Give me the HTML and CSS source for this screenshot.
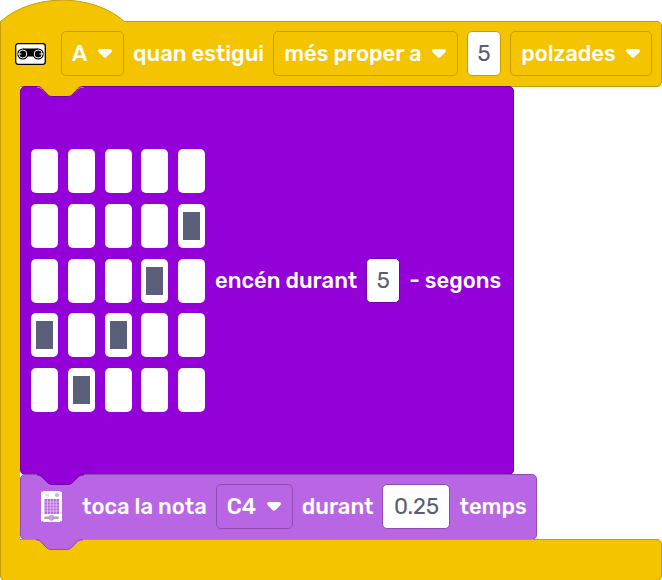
FILE: index.html
```html
<!DOCTYPE html>
<html lang="ca">
<head>
<meta charset="utf-8">
<meta name="viewport" content="width=device-width, initial-scale=1">
<title>Blocs</title>
<link rel="stylesheet" href="styles.css">
</head>
<body>
<main class="event">
  <svg class="hat" width="126" height="22" viewBox="0 0 126 22" aria-hidden="true"><path d="M.5 22V21.500C33-7 92-7 124.500 21.500L126 22z" fill="#f5c400"/><path d="M.5 21.500C33-7 92-7 124.500 21.500" fill="none" stroke="#c49d00"/></svg>
  <div class="row head">
    <svg class="sensor" width="31" height="22" viewBox="0 0 31 22" role="img" aria-label="Sensor de distància"><rect x=".7" y=".7" width="29.600" height="20.600" rx="2.500" fill="#fff" stroke="#000" stroke-width="1.300"/><path d="M8 5.500h15v8H8z"/><circle cx="7.800" cy="11" r="5.600"/><circle cx="23.200" cy="11" r="5.600"/><g fill="none" stroke="#fff"><circle cx="7.800" cy="11" r="4"/><circle cx="23.200" cy="11" r="4"/></g><path d="M2.500 11h4M24.500 11h4" stroke="#fff"/></svg>
    <span class="field"><select aria-label="Port"><option>A</option></select><svg class="arrow" viewBox="0 0 14 9"><path d="M2 0h10q2 0 2 1.500 0 1-1 2L8.500 8q-1.500 1.500-3 0L1 3.500q-1-1-1-2Q0 0 2 0z"/></svg></span>
    <span class="text">quan estigui</span>
    <span class="field"><select aria-label="Comparació"><option>més proper a</option></select><svg class="arrow" viewBox="0 0 14 9"><path d="M2 0h10q2 0 2 1.500 0 1-1 2L8.500 8q-1.500 1.500-3 0L1 3.500q-1-1-1-2Q0 0 2 0z"/></svg></span>
    <input class="value" type="text" value="5" aria-label="Distància">
    <span class="field"><select aria-label="Unitat"><option>polzades</option></select><svg class="arrow" viewBox="0 0 14 9"><path d="M2 0h10q2 0 2 1.500 0 1-1 2L8.500 8q-1.500 1.500-3 0L1 3.500q-1-1-1-2Q0 0 2 0z"/></svg></span>
  </div>
  <div class="body">
    <div class="arm"></div>
    <div class="stack">
      <div class="row light">
        <svg class="notch" width="48" height="12" viewBox="0 0 48 12" aria-hidden="true"><path class="fill" d="M0 0v1.500c3 0 4 1 5.500 2.500l4.500 4.500c1.500 1.500 3 2 5 2h16c2 0 3.500-.5 5-2L40.500 4C42 2.500 43 1.500 47 1.500V0z"/><path class="line" d="M0 .5c3 0 4 1 5.500 2.500L10 8c1.500 1.500 3 2.500 5 2.500h16c2 0 3.500-1 5-2.500l4.500-5C42 1.500 43 .5 47 .5"/></svg>
        <div class="leds">
          <input type="checkbox" aria-label="LED 1,1"><input type="checkbox" aria-label="LED 1,2"><input type="checkbox" aria-label="LED 1,3"><input type="checkbox" aria-label="LED 1,4"><input type="checkbox" aria-label="LED 1,5">
          <input type="checkbox" aria-label="LED 2,1"><input type="checkbox" aria-label="LED 2,2"><input type="checkbox" aria-label="LED 2,3"><input type="checkbox" aria-label="LED 2,4"><input type="checkbox" aria-label="LED 2,5" checked>
          <input type="checkbox" aria-label="LED 3,1"><input type="checkbox" aria-label="LED 3,2"><input type="checkbox" aria-label="LED 3,3"><input type="checkbox" aria-label="LED 3,4" checked><input type="checkbox" aria-label="LED 3,5">
          <input type="checkbox" aria-label="LED 4,1" checked><input type="checkbox" aria-label="LED 4,2"><input type="checkbox" aria-label="LED 4,3" checked><input type="checkbox" aria-label="LED 4,4"><input type="checkbox" aria-label="LED 4,5">
          <input type="checkbox" aria-label="LED 5,1"><input type="checkbox" aria-label="LED 5,2" checked><input type="checkbox" aria-label="LED 5,3"><input type="checkbox" aria-label="LED 5,4"><input type="checkbox" aria-label="LED 5,5">
        </div>
        <span class="text">encén durant</span>
        <input class="value" type="text" value="5" aria-label="Segons">
        <span class="text">- segons</span>
      </div>
      <div class="row sound">
        <svg class="notch" width="48" height="12" viewBox="0 0 48 12" aria-hidden="true"><path class="fill" d="M0 0v1.500c3 0 4 1 5.500 2.500l4.500 4.500c1.500 1.500 3 2 5 2h16c2 0 3.500-.5 5-2L40.500 4C42 2.500 43 1.500 47 1.500V0z"/><path class="line" d="M0 .5c3 0 4 1 5.500 2.500L10 8c1.500 1.500 3 2.500 5 2.500h16c2 0 3.500-1 5-2.500l4.500-5C42 1.500 43 .5 47 .5"/></svg>
        <svg class="hub" width="21" height="31" viewBox="0 0 21 31" role="img" aria-label="Hub"><rect width="21" height="31" rx="1" fill="#fff"/><path d="M3.500 8h14.500v15H3.500z" fill="#b565e2"/><path d="M6.500 8v15M9.400 8v15M12.300 8v15M15.200 8v15M3.500 11h14.500M3.500 14h14.500M3.500 17h14.500M3.500 20h14.500" stroke="#ead2f6" stroke-width=".7"/><path d="M4 2.500h4v3H4z" fill="#e4e1e7"/><circle cx="16" cy="4" r="1.700" fill="#d5b5e8" stroke="#aaa" stroke-width=".6"/><rect x="3" y="25.500" width="15" height="2.500" rx="1.200" fill="#aaa"/><circle cx="10.500" cy="26.800" r="2.600" fill="#d29af0" stroke="#b68aca" stroke-width=".6"/><path d="M0 0h2v1H0zM19 0h2v1h-2zM0 30h2v1H0zM19 30h2v1h-2z" fill="#aaa"/></svg>
        <span class="text">toca la nota</span>
        <span class="field"><select aria-label="Nota"><option>C4</option></select><svg class="arrow" viewBox="0 0 14 9"><path d="M2 0h10q2 0 2 1.500 0 1-1 2L8.500 8q-1.500 1.500-3 0L1 3.500q-1-1-1-2Q0 0 2 0z"/></svg></span>
        <span class="text">durant</span>
        <input class="value wide" type="text" value="0.25" aria-label="Durada">
        <span class="text">temps</span>
      </div>
    </div>
  </div>
  <div class="foot">
    <svg class="notch" width="48" height="12" viewBox="0 0 48 12" aria-hidden="true"><path class="fill" d="M0 0v1.500c3 0 4 1 5.500 2.500l4.500 4.500c1.500 1.500 3 2 5 2h16c2 0 3.500-.5 5-2L40.500 4C42 2.500 43 1.500 47 1.500V0z"/><path class="line" d="M0 .5c3 0 4 1 5.500 2.500L10 8c1.500 1.500 3 2.500 5 2.500h16c2 0 3.500-1 5-2.500l4.500-5C42 1.500 43 .5 47 .5"/></svg>
  </div>
</main>
</body>
</html>
```
FILE: styles.css
```css
* {
  box-sizing: border-box;
}

body {
  margin: 0;
  background: #fff;
  color: #fff;
  font: 500 22px/26px Rubik, Roboto, sans-serif;
}

.hat {
  display: block;
  position: relative;
  z-index: 1;
}

.row {
  --line: #c49d00;
  position: relative;
  display: flex;
  align-items: center;
  gap: 9px;
  padding: 9px 9px 10px 10px;
  border: 1px solid var(--line);
  border-radius: 5px;
  white-space: nowrap;
}

.text {
  flex: none;
}

.head {
  margin-top: -1px;
  padding-left: 14px;
  background: #f5c400;
  border-top-left-radius: 0;
  border-bottom-left-radius: 0;
}

.sensor {
  flex: none;
  margin-right: 6px;
}

.field {
  position: relative;
  display: flex;
  flex: none;
}

.head .field:last-child {
  flex: 1 0 auto;
}

select {
  appearance: none;
  width: 100%;
  height: 45px;
  margin: 0;
  padding: 0 35px 0 10px;
  border: 1px solid var(--line);
  border-radius: 5px;
  background: transparent;
  color: inherit;
  font: inherit;
}

.arrow {
  position: absolute;
  top: 18px;
  right: 12px;
  width: 14px;
  height: 9px;
  fill: #fff;
  pointer-events: none;
}

.value {
  flex: none;
  width: 34px;
  height: 45px;
  margin: 0;
  padding: 0;
  border: 1px solid var(--line);
  border-radius: 5px;
  background: #fff;
  color: #575e75;
  font: inherit;
  font-weight: 400;
  text-align: center;
}

.wide {
  width: 68px;
}

.body {
  display: flex;
}

.arm {
  position: relative;
  z-index: 1;
  flex: none;
  width: 20px;
  margin: -3px 0 -2px;
  border-left: 1px solid #c49d00;
  background: #f5c400;
}

.stack {
  display: flex;
  flex-direction: column;
  align-items: flex-start;
  margin-top: -1px;
}

.light {
  --line: #7200a8;
  padding: 62px 12px 62px 10px;
  background: #9400d8;
}

.leds {
  display: grid;
  flex: none;
  grid-template-columns: repeat(5, 27px);
  justify-content: space-between;
  align-content: space-between;
  width: 174px;
  height: 263px;
  margin-right: 1px;
}

.leds input {
  appearance: none;
  width: 27px;
  height: 44px;
  margin: 0;
  padding: 8px 5px;
  border-radius: 5px;
  background: #fff;
}

.leds input:checked {
  background: linear-gradient(#5a5f7a, #5a5f7a) content-box, #fff;
}

.sound {
  --line: #8f4bb4;
  margin-top: -1px;
  padding-left: 20px;
  background: #b966e5;
}

.hub {
  flex: none;
  margin-right: 11px;
}

.foot {
  position: relative;
  height: 42px;
  margin-top: -1px;
  border: 1px solid #c49d00;
  border-radius: 0 5px 5px 5px;
  background: #f5c400;
}

.notch {
  position: absolute;
  top: -1px;
  left: 16px;
}

.foot .notch {
  left: 35px;
}

.notch .fill {
  fill: #f5c400;
}

.notch .line {
  fill: none;
  stroke: #7200a8;
}

.sound .fill {
  fill: #9400d8;
}

.foot .fill {
  fill: #b966e5;
}

.foot .line {
  stroke: #8f4bb4;
}
```
